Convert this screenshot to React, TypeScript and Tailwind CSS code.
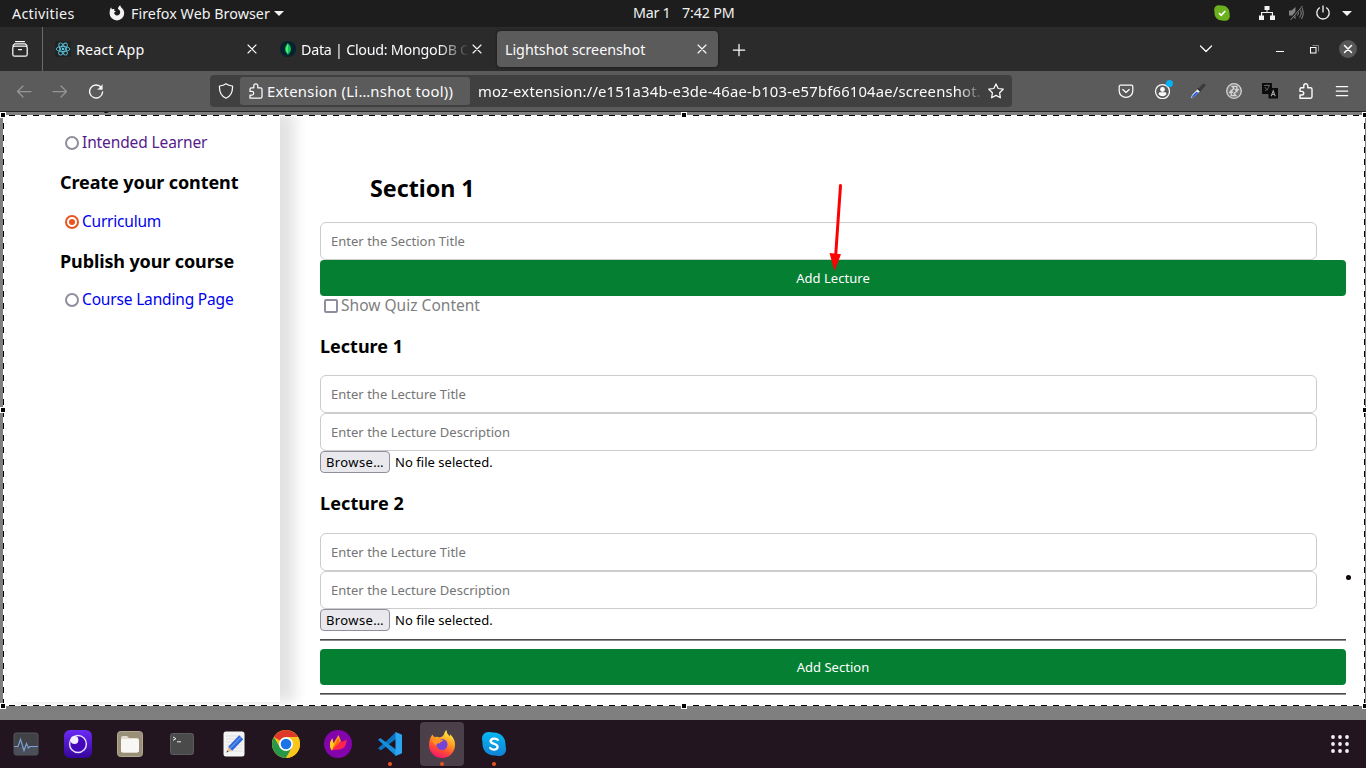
import type { ReactNode } from 'react';

type IconProps = { children: ReactNode; size?: string; box?: string };

function Icon({ children, size = 'size-4', box = '0 0 16 16' }: IconProps) {
  return (
    <svg
      viewBox={box}
      className={`${size} shrink-0`}
      fill="none"
      stroke="currentColor"
      strokeWidth="1.25"
      strokeLinecap="round"
      strokeLinejoin="round"
    >
      {children}
    </svg>
  );
}

const puzzle =
  'M2 15.200h10.600a1.400 1.400 0 0 0 1.400-1.400V6.200a1.400 1.400 0 0 0-1.400-1.400H9.800V2.800a2 2 0 0 0-4 0v2H3.400A1.400 1.400 0 0 0 2 6.200v2.200h1.900a1.800 1.800 0 0 1 0 3.600H2z';

function Close() {
  return (
    <Icon size="size-3" box="0 0 12 12">
      <path d="M2 2l8 8M10 2l-8 8" strokeWidth="1.1" />
    </Icon>
  );
}

function TopBar() {
  return (
    <header className="flex h-[27px] shrink-0 items-center bg-[#1d1d1d] text-[14.3px] text-[#f2f2f2]">
      <span className="ml-3 w-[97px] tracking-[0.3px]">Activities</span>
      <svg viewBox="0 0 16 16" className="mb-[2px] size-4 shrink-0 fill-[#f2f2f2]">
        <path d="M2.100 2.200c.1 1 .5 1.600 1.200 2 .8-.3 1.500-.3 2.300 0L5 5.600l1.700.6c-.2.7-1.300.8-1.500 1.600-.1 1.500 1.200 2.600 2.800 2.600 1.800 0 3.200-1.400 3.200-3.200 0-1.800-1-2.700-2.200-3.300C9 2.500 9.700 1.100 11.300.2c.1 1.300.7 2 1.700 3 1.400 1.300 2.200 3 2.200 5A7.300 7.300 0 0 1 .6 8.200c0-2.300.5-4.400 1.500-6z" />
      </svg>
      <span className="ml-[6px] w-[138px] whitespace-nowrap tracking-[0.03px]">Firefox Web Browser</span>
      <svg viewBox="0 0 10 5" className="ml-[5px] h-[5px] w-[10px] fill-[#f2f2f2]">
        <path d="M0 0h10L5 5z" />
      </svg>
      <span className="mb-[2px] ml-[349px] w-[49px] whitespace-nowrap tracking-[-0.3px]">Mar 1</span>
      <span className="mb-[2px] w-[60px] whitespace-nowrap tracking-[-0.16px]">7:42 PM</span>
      <svg viewBox="0 0 16 16" className="mb-[2px] ml-[472px] size-4 shrink-0">
        <path d="M5 .2C2 .2.2 2 .2 4.600c0 1 .3 1.700.3 3.400 0 4.300 3.200 7.500 7.500 7.500 1.200 0 2 .3 3.200.3 2.700 0 4.600-1.900 4.600-4.500 0-1.200-.3-2-.3-3.300C15.500 3.700 12.300.5 8 .5 6.800.5 6 .2 5 .2z" fill="#6bb11d" />
        <path d="M5 8.200l2.200 2.200L11.300 6" fill="none" stroke="#fff" strokeWidth="1.7" />
      </svg>
      <svg viewBox="0 0 16 14" className="mb-[2px] ml-[29px] h-[14px] w-4 shrink-0 fill-[#f2f2f2]">
        <path d="M5.500 0h5v4h-2v2H14v3.500h2V14h-5V9.500h1.800V7H3.200v2.500H5V14H0V9.500h2V6h5.500V4h-2z" />
      </svg>
      <svg viewBox="0 0 16 16" className="mb-[2px] ml-[13px] size-4 shrink-0 text-[#828282]" fill="none" stroke="currentColor">
        <path d="M1 5.500h2.500L7.500 2v12l-4-3.500H1z" fill="currentColor" stroke="none" />
        <path d="M9.500 5.500q2 2.500 0 5M11.500 3.500q3.500 4.500 0 9M13.500 2q3.500 6 0 12" />
        <path d="M14 1L2 15" stroke="#1d1d1d" strokeWidth="2.5" />
        <path d="M14.500 1L2.500 15" />
      </svg>
      <svg viewBox="0 0 16 16" className="mb-[2px] ml-[11px] size-4 shrink-0" fill="none" stroke="#f2f2f2" strokeWidth="1.3">
        <path d="M4.800 2.500a6.200 6.200 0 1 0 6.400 0M8 .5v7" />
      </svg>
      <svg viewBox="0 0 10 5" className="ml-[11px] h-[5px] w-[10px] fill-[#f2f2f2]">
        <path d="M0 0h10L5 5z" />
      </svg>
    </header>
  );
}

function TabStrip() {
  return (
    <div className="flex h-11 shrink-0 items-center bg-[#2b2b2b] text-[14.3px] text-[#fbfbfe]">
      <div className="flex h-full w-[43px] items-center border-r border-[#6a6a6a] pl-3">
        <Icon>
          <rect x=".8" y="5" width="14.4" height="10.2" rx="1.8" />
          <path d="M1 4.600l1.600-1.800h10.800L15 4.600M3.600.6h8.800M6.500 8.600h3" />
        </Icon>
      </div>
      <div className="flex w-[226px] items-center pl-3">
        <svg viewBox="0 0 16 16" className="size-4 shrink-0" fill="none" stroke="#58c4dc" strokeWidth=".9">
          <rect width="16" height="16" rx="1.5" fill="#222222" stroke="none" />
          <ellipse cx="8" cy="8" rx="6.8" ry="2.6" />
          <ellipse cx="8" cy="8" rx="6.800" ry="2.6" transform="rotate(60 8 8)" />
          <ellipse cx="8" cy="8" rx="6.800" ry="2.6" transform="rotate(120 8 8)" />
          <circle cx="8" cy="8" r="1.3" fill="#58c4dc" stroke="none" />
        </svg>
        <span className="ml-[5px] flex-1 pt-[2px] tracking-[0.1px]">React App</span>
        <span className="mr-[11px]"><Close /></span>
      </div>
      <div className="flex w-[228px] items-center pl-[11px]">
        <svg viewBox="0 0 16 16" className="size-4 shrink-0">
          <circle cx="8" cy="8" r="8" fill="#05232e" />
          <path d="M8 2.200c4 4 3.800 8.300.3 10.800V14h-.6v-1C4.200 10.500 4 6.200 8 2.200z" fill="#13c45a" />
          <path d="M8 2.200c-2.700 4-2.700 7.500 0 10.800z" fill="#4aec7d" />
        </svg>
        <span className="ml-[5px] w-[170px] overflow-hidden whitespace-nowrap pt-[2px] tracking-[-0.26px] [mask-image:linear-gradient(to_right,#000_138px,transparent_168px)]">
          Data | Cloud: MongoDB C
        </span>
        <Close />
      </div>
      <div className="flex h-9 w-[221px] items-center rounded bg-[#5b5b5b] pl-2 shadow-[0_0_3px_rgba(0,0,0,0.5)]">
        <span className="flex-1 pt-[2px] tracking-[-0.03px]">Lightshot screenshot</span>
        <span className="mr-[10px]"><Close /></span>
      </div>
      <span className="ml-[13px] pt-px">
        <Icon>
          <path d="M8 2.300v11.400M2.300 8h11.400" />
        </Icon>
      </span>
      <span className="ml-[451px]">
        <Icon>
          <path d="M2.500 5l5.500 5.500L13.500 5" />
        </Icon>
      </span>
      <svg viewBox="0 0 8 16" className="ml-[62px] h-4 w-2 fill-[#fbfbfe]">
        <path d="M0 10h8v1H0z" />
      </svg>
      <svg viewBox="0 0 9 9" className="ml-[26px] size-[9px]" fill="none" strokeWidth="1">
        <path d="M2.500.5h6v6" stroke="#8b8b8b" />
        <rect x=".5" y="2.5" width="5.5" height="5.5" stroke="#fff" />
      </svg>
      <span className="ml-[20px] flex size-[18px] items-center justify-center rounded-full bg-[#575757]">
        <Icon size="size-3" box="0 0 12 12">
          <path d="M2.500 2.500l7 7M9.500 2.500l-7 7" strokeWidth="1.6" />
        </Icon>
      </span>
    </div>
  );
}

function Toolbar() {
  return (
    <div className="flex h-10 shrink-0 items-center bg-[#5b5b5b] text-[#fbfbfe]">
      <span className="ml-4 text-[#969696]">
        <Icon><path d="M15 8.500H1.500M7 3L1.500 8.500 7 14" /></Icon>
      </span>
      <span className="ml-5 text-[#969696]">
        <Icon><path d="M1 8.500h13.500M9 3l5.500 5.500L9 14" /></Icon>
      </span>
      <span className="ml-5">
        <Icon>
          <path d="M13.300 4.600A6.500 6.500 0 1 0 14.600 9" strokeWidth="1.4" />
          <path d="M14.400 1.900v4.500H9.900z" fill="currentColor" strokeWidth=".4" />
        </Icon>
      </span>
      <div className="ml-[106px] flex h-8 w-[802px] items-center rounded bg-[#404040] pl-2">
        <Icon>
          <path d="M8 .8c2 1.600 4 2 6.500 2.200.3 5.500-1.500 10-6.500 12.200C3 13 1.200 8.500 1.500 3 4 2.800 6 2.400 8 .8z" />
        </Icon>
        <div className="ml-[6px] flex h-7 w-[230px] items-center rounded-[3px] bg-[#5b5b5b] pl-2">
          <Icon><path d={puzzle} /></Icon>
          <span className="ml-[3px] whitespace-nowrap text-[14.8px] tracking-[0.28px]">Extension (Li…nshot tool))</span>
        </div>
        <span className="ml-2 w-[502px] overflow-hidden whitespace-nowrap text-[14.8px] tracking-[0.19px] [mask-image:linear-gradient(to_right,#000_480px,transparent_506px)]">
          moz-extension://e151a34b-e3de-46ae-b103-e57bf66104ae/screenshot.h
        </span>
        <span className="ml-2">
          <Icon>
            <path d="M8 .9l2.200 4.600 5 .7-3.600 3.600.8 5L8 12.400l-4.400 2.400.8-5L.8 6.200l5-.7z" />
          </Icon>
        </span>
      </div>
      <span className="ml-[106px]">
        <Icon>
          <path d="M2.500 2.200h11a1.300 1.300 0 0 1 1.300 1.300V8A6.800 6.300 0 0 1 1.200 8V3.500a1.300 1.300 0 0 1 1.300-1.300zM4.800 6.500L8 9.500l3.200-3" />
        </Icon>
      </span>
      <span className="relative ml-5">
        <Icon>
          <circle cx="8.500" cy="8.500" r="7" />
          <circle cx="8.500" cy="6.500" r="2.400" fill="currentColor" stroke="none" />
          <path d="M4.500 11c0-1.200.8-1.800 1.800-1.800h4.400c1 0 1.800.6 1.800 1.800-1 1.500-2.500 2.200-4 2.200S5.500 12.500 4.500 11z" fill="currentColor" stroke="none" />
        </Icon>
        <span className="absolute -top-[3px] -right-[3px] size-[7px] rounded-full bg-[#00b3f4]" />
      </span>
      <svg viewBox="0 0 16 16" className="ml-5 size-4">
        <path d="M8.500 5.500L12.600 1q1.900-.8 2.900.3.300 1.200-.4 2L11 7.700z" fill="#3b3b3b" />
        <path d="M8 5l3 3-1 1L7 6z" fill="#222" />
        <path d="M7.500 6.200L9.800 8.500 4 13.800.8 15.200 2 12z" fill="#e4e9f5" />
        <path d="M6.500 8.800l2 .9-4.500 4.100-2.500.7 1-2z" fill="#2f62e0" />
      </svg>
      <svg viewBox="0 0 16 16" className="ml-5 size-4" fill="none" stroke="#d4d4d4">
        <circle cx="8" cy="8" r="7.300" fill="#777" strokeWidth="1.3" />
        <path d="M3.200 10L8 5.200 6.200 3.400h4.600V8L9 6.200M12.800 6L8 10.800l1.800 1.800H5.200V8L7 9.800" strokeWidth="1.300" />
      </svg>
      <svg viewBox="0 0 16 16" className="ml-5 size-4">
        <path d="M0 0h10v5h6v10.500H6.500V11H0z" fill="#0c0c0c" />
        <path d="M2 2.500h6M5 1.500v1M3 8c2-1 3.500-3 4-5M3 4c.5 1.500 1.500 2.500 3 3" fill="none" stroke="#777" strokeWidth=".8" />
        <path d="M9.200 13.200l2-5.400 2 5.400M9.800 11.500h2.800" fill="none" stroke="#a4a4a4" strokeWidth="1.1" />
      </svg>
      <span className="ml-5"><Icon><path d={puzzle} strokeWidth="1.4" /></Icon></span>
      <span className="ml-5"><Icon><path d="M2.300 3.500h11.400M2.300 8h11.400M2.300 12.500h11.400" /></Icon></span>
    </div>
  );
}

function RadioLink({ label, checked, className }: { label: string; checked?: boolean; className: string }) {
  return (
    <div className="flex h-5 items-center pl-[65px] text-[15.5px]">
      <span
        className={`mt-[2px] mr-[3px] flex size-[14px] shrink-0 items-center justify-center rounded-full border-2 ${checked ? 'border-[#e95420]' : 'border-[#8f8f9d]'}`}
      >
        {checked && <span className="size-[6px] rounded-full bg-[#e95420]" />}
      </span>
      <a className={`pt-[2px] ${className}`}>{label}</a>
    </div>
  );
}

function Sidebar() {
  return (
    <aside className="flex h-[590px] w-[280px] shrink-0 flex-col bg-white text-black shadow-[15px_0_13px_0_#e3e3e3]">
      <h3 className="-mt-[22px] h-6 pl-[60px] text-[18px] leading-6 font-bold">Plan your course</h3>
      <div className="mt-[18px]">
        <RadioLink label="Intended Learner" className="text-[#551a8b] tracking-[-0.12px]" />
      </div>
      <h3 className="mt-[18px] h-6 pl-[60px] text-[18px] leading-6 font-bold tracking-[-0.1px]">Create your content</h3>
      <div className="mt-[17px]">
        <RadioLink label="Curriculum" checked className="text-[#0000ee] tracking-[-0.22px]" />
      </div>
      <h3 className="mt-[18px] h-6 pl-[60px] text-[18px] leading-6 font-bold tracking-[-0.12px]">Publish your course</h3>
      <div className="mt-4">
        <RadioLink label="Course Landing Page" className="text-[#0000ee] tracking-[-0.17px]" />
      </div>
    </aside>
  );
}

function Field({ placeholder }: { placeholder: string }) {
  return (
    <input
      placeholder={placeholder}
      className="block h-[38px] w-[997px] rounded-[6px] border border-[#cccccc] bg-white px-[10px] text-[13px] tracking-[0.02px] placeholder:text-[#757575]"
    />
  );
}

function GreenButton({ children }: { children: string }) {
  return (
    <button className="block h-9 w-full rounded-[4px] bg-[#058033] pt-[2px] text-[13px] tracking-[0.03px] text-white">
      {children}
    </button>
  );
}

function Lecture({ title, className }: { title: string; className: string }) {
  return (
    <section>
      <h3 className={`mt-[18px] h-6 text-[18px] leading-6 font-bold ${className}`}>{title}</h3>
      <Field placeholder="Enter the Lecture Title" />
      <Field placeholder="Enter the Lecture Description" />
      <div className="flex h-[22px] items-center text-[13px]">
        <button className="h-[22px] w-[70px] rounded-[4px] border border-[#8f8f9d] bg-[#e9e9ed] leading-5 tracking-[0.4px]">
          Browse…
        </button>
        <span className="ml-[5px] pt-[2px] tracking-[0.04px]">No file selected.</span>
      </div>
    </section>
  );
}

function Divider() {
  return <hr className="my-2 h-[2px] border-0 border-t border-b border-t-[#4c4c4c] border-b-[#8a8a8a]" />;
}

function Handle({ className }: { className: string }) {
  return <span className={`absolute size-[6px] border border-white bg-black ${className}`} />;
}

const dashX =
  'bg-[repeating-linear-gradient(to_right,#000_0px,#000_6px,#fff_6px,#fff_12px)]';
const dashY =
  'bg-[repeating-linear-gradient(to_bottom,#000_0px,#000_6px,#fff_6px,#fff_12px)]';

function Selection() {
  return (
    <div className="pointer-events-none absolute inset-0">
      <div className="absolute inset-0 border-t-[3px] border-r border-b-[14px] border-l-[3px] border-black/50" />
      <div className={`absolute top-[3px] -left-[3px] right-px h-px ${dashX}`} />
      <div className={`absolute top-[593px] -left-[3px] right-px h-px ${dashX}`} />
      <div className={`absolute top-[-1px] left-[3px] h-[595px] w-px [clip-path:inset(4px_0_0_0)] ${dashY}`} />
      <div className={`absolute top-[-1px] right-[1px] h-[595px] w-px [clip-path:inset(4px_0_0_0)] ${dashY}`} />
      <Handle className="top-0 left-0" />
      <Handle className="top-0 left-[681px]" />
      <Handle className="top-0 right-[-2px]" />
      <Handle className="top-[295px] left-0" />
      <Handle className="top-[295px] right-[-2px]" />
      <Handle className="top-[591px] left-0" />
      <Handle className="top-[591px] left-[681px]" />
      <Handle className="top-[591px] right-[-2px]" />
      <svg viewBox="0 0 20 90" className="absolute top-[70px] left-[827px] h-[90px] w-5">
        <path d="M13.500 3.500L8.500 76" stroke="#fe0000" strokeWidth="3" strokeLinecap="round" />
        <path d="M2.500 71L14 72.200 7.500 89z" fill="#fe0000" />
      </svg>
      <span className="absolute top-[463px] left-[1346px] size-[5px] rounded-full border-2 border-black bg-[#c01020]" />
    </div>
  );
}

function Page() {
  return (
    <div className="relative flex h-[608px] shrink-0 overflow-hidden bg-white">
      <Sidebar />
      <main className="w-[1066px] shrink-0 pt-[62px] pl-10 text-black">
        <h2 className="mb-5 h-7 pl-[50px] text-[23.3px] leading-7 font-bold tracking-[-0.03px]">Section 1</h2>
        <Field placeholder="Enter the Section Title" />
        <GreenButton>Add Lecture</GreenButton>
        <label className="flex h-5 items-center pl-1 text-[15.5px] tracking-[0.02px] text-[#808080]">
          <span className="mr-[3px] size-[14px] rounded-[2px] border-2 border-[#8f8f9d] bg-white" />
          Show Quiz Content
        </label>
        <Lecture title="Lecture 1" className="mb-[17px]" />
        <Lecture title="Lecture 2" className="mb-[18px] tracking-[0.1px]" />
        <Divider />
        <GreenButton>Add Section</GreenButton>
        <Divider />
      </main>
      <Selection />
    </div>
  );
}

function DockItem({ children, running, active }: { children: ReactNode; running?: boolean; active?: boolean }) {
  return (
    <div className={`relative flex size-11 items-center justify-center rounded-[4px] ${active ? 'bg-[#4b3f49]' : ''}`}>
      <svg viewBox="0 0 28 28" className="size-7" fill="none">
        {children}
      </svg>
      {running && <span className="absolute bottom-0 left-5 size-1 rounded-full bg-[#e95420]" />}
    </div>
  );
}

function Dock() {
  return (
    <footer className="flex h-12 shrink-0 items-center gap-2 bg-[#22151f] pl-1">
      <DockItem>
        <rect x="2" y="3" width="24" height="22" rx="2" fill="#414246" stroke="#55565a" />
        <path d="M2.500 17h23v6.500a1.500 1.500 0 0 1-1.500 1.500H4a1.500 1.500 0 0 1-1.500-1.500z" fill="#4a4f59" />
        <path d="M2 16.500h4L8.500 9.500l3.500 11 2.500-7 2 4.500 1.500-1.500h8" stroke="#7c9fd6" strokeWidth="1.2" />
      </DockItem>
      <DockItem>
        <defs>
          <linearGradient id="eye" x1="0" y1="0" x2="0" y2="1">
            <stop stopColor="#6a2af5" />
            <stop offset="1" stopColor="#35059a" />
          </linearGradient>
        </defs>
        <rect width="28" height="28" rx="6" fill="url(#eye)" />
        <circle cx="14" cy="14" r="8.4" fill="#4507bb" stroke="#e7dcfb" strokeWidth="1.5" />
        <circle cx="10.500" cy="10" r="3.900" fill="#f3eeff" />
      </DockItem>
      <DockItem>
        <rect x="1.500" y="1.500" width="25" height="25" rx="3" fill="#9a9078" stroke="#b3a990" />
        <path d="M5 8a2 2 0 0 1 2-2h4l2 2h8a2 2 0 0 1 2 2v10.500a2 2 0 0 1-2 2H7a2 2 0 0 1-2-2z" fill="#e3dccf" />
        <rect x="5" y="9" width="18" height="13.500" rx="2" fill="#f8f7f6" />
      </DockItem>
      <DockItem>
        <rect x="2.500" y="3.500" width="23" height="21" rx="2" fill="#4a4a4a" stroke="#5b5b5b" />
        <path d="M5 7l3 1.700L5 10.400M9 11.800h4" stroke="#ececec" />
      </DockItem>
      <DockItem>
        <rect x="3.500" y="1.500" width="21" height="25" rx="2.500" fill="#f4f4f4" />
        <path d="M6 6h16M6 9h16M6 12h16M6 15h16M6 18h16M6 21h16" stroke="#dedede" />
        <path d="M6.500 22.500l2-5.500 3.500 3.500z" fill="#efbb91" />
        <path d="M6.500 22.500l.7-2 1.300 1.300z" fill="#333" />
        <path d="M8.200 16.700L19.200 5.200l4 4L12.300 20.800z" fill="#2d68dc" />
        <path d="M9.500 18L20.500 6.500l1 1L10.500 19z" fill="#5b95f0" />
      </DockItem>
      <DockItem>
        <circle cx="14" cy="14" r="14" fill="#f8c31a" />
        <path d="M14 14L1.900 7A14 14 0 0 1 26.100 7z" fill="#df382b" />
        <path d="M1.900 7A14 14 0 0 0 14 28l6.100-10.500L14 14 8 17.500z" fill="#27984a" />
        <path d="M14 7h12.100A14 14 0 0 1 14 28l6.100-10.500z" fill="#fbc61c" />
        <circle cx="14" cy="14" r="7" fill="#fff" />
        <circle cx="14" cy="14" r="5.300" fill="#1b73e8" />
      </DockItem>
      <DockItem>
        <circle cx="14" cy="14" r="14" fill="#8404ab" />
        <path d="M7.800 20.500C5 16 5.500 12 8.500 8.500c0 2.500.5 3.500 1.300 5C11 10 13 8 14.500 5c1 2 1.200 3.500 2.500 6z" fill="#ffa31a" />
        <path d="M7.800 20.500C5 16 5.500 12 8.500 8.500c0 3 1.500 4 1.300 6z" fill="#ffd11a" />
        <path d="M8.500 20c1-5 4.500-8 5.500-12 1.500 1.500 1.500 3 2.500 5.500z" fill="#ff680d" />
        <path d="M8 20.500c1.500-3.500 4.500-5 7.500-7.800 2.500-1.500 5-1.500 7.500-3.200-1 2-.5 5-2.500 7.500-3 3.500-8 2-12.500 3.500z" fill="#ff234f" />
      </DockItem>
      <DockItem running>
        <path d="M20 5L2 18.300l2.500 1.900L20 8.500z" fill="#0a7bca" />
        <path d="M20 2L10.500 11 3 17.400l2 2.800L20 9z" fill="#0b74c2" />
        <path d="M4.300 8L20 19.500V26L2 9.800z" fill="#168edc" />
        <path d="M19.500 2L26 4.800v18.400L19.500 26z" fill="#2ba5f2" />
      </DockItem>
      <DockItem running active>
        <defs>
          <linearGradient id="fox" x1="20" y1="1" x2="8" y2="27" gradientUnits="userSpaceOnUse">
            <stop stopColor="#fff044" />
            <stop offset=".4" stopColor="#ff9a20" />
            <stop offset=".7" stopColor="#ff4b37" />
            <stop offset="1" stopColor="#f5156c" />
          </linearGradient>
        </defs>
        <path d="M4.500 4.500c.5 1.500 1.500 2.200 2.500 2.700 2-.6 3-.5 4.500.3C13.500 7 15 6 16 4.500 16.500 2.500 17 1 18.500 0c0 3 1.500 4.500 3.500 6.500 0-1 0-1.500-.2-2.500C25 7 27.300 10.500 27 15a13 13 0 0 1-26 0c0-4.500 1.500-8 3.500-10.500z" fill="url(#fox)" />
        <circle cx="14" cy="14.500" r="5.500" fill="#7543d8" />
        <path d="M4 11c3-2.500 6-2.500 8.500-1.500l3 .5c-1 2-3.500 1.500-4 3.500-2-.5-3 .5-3.500 2z" fill="#ff9520" />
      </DockItem>
      <DockItem running>
        <defs>
          <linearGradient id="sky" x1="0" y1="0" x2="0" y2="1">
            <stop stopColor="#05b7ef" />
            <stop offset="1" stopColor="#1183d8" />
          </linearGradient>
        </defs>
        <path d="M8.500 2C4.500 2 2 5 2 8.500c0 2 .5 3 .5 5.500C2.500 20.500 7.500 25.500 14 25.500c2 0 3.500.5 5.500.5 4 0 6.500-3 6.500-6.500 0-2-.5-3.500-.5-5.500C25.500 7.500 20.500 2.500 14 2.500c-2 0-3.500-.5-5.500-.5z" fill="url(#sky)" />
        <path d="M17.800 9.800C16.800 8.300 11 7.600 10.600 11c-.3 3.500 7 2 7 5.700 0 3.600-6 3.500-7.400 1.300" stroke="#fff" strokeWidth="2.300" strokeLinecap="round" />
      </DockItem>
      <svg viewBox="0 0 18 18" className="mr-[17px] ml-auto size-[18px] fill-[#f4f1f3]">
        {[2, 9, 16].map((y) => [2, 9, 16].map((x) => <circle key={`${x}-${y}`} cx={x} cy={y} r="1.900" />))}
      </svg>
    </footer>
  );
}

export default function App() {
  return (
    <div className="flex h-[768px] w-[1366px] flex-col overflow-hidden bg-[#1d1d1d] font-['Noto_Sans',sans-serif]">
      <TopBar />
      <TabStrip />
      <Toolbar />
      <div className="h-px shrink-0 bg-[#222222]" />
      <Page />
      <Dock />
    </div>
  );
}
